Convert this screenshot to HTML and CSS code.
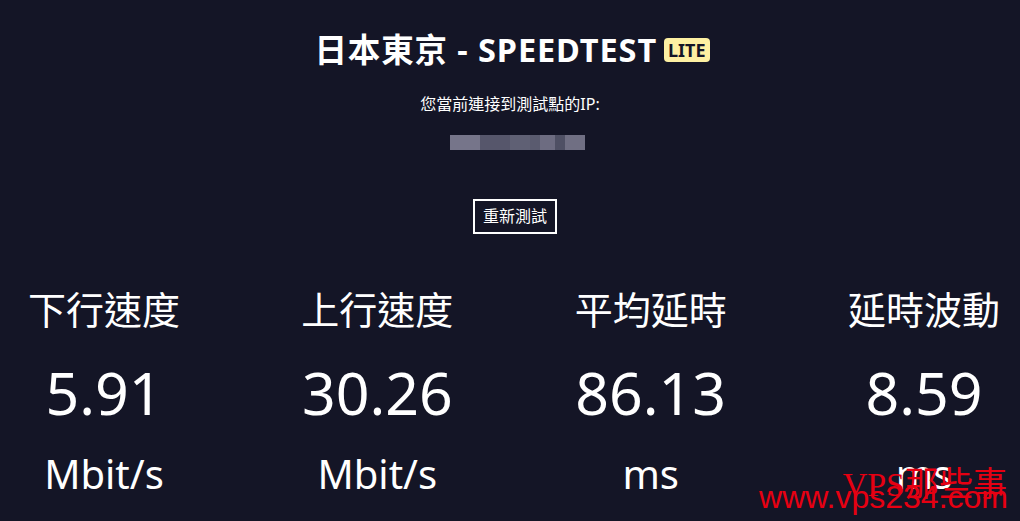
FILE: index.html
```html
<!DOCTYPE html>
<html lang="zh-Hant">

<head>
    <meta charset="UTF-8">
    <meta name="viewport" content="width=device-width, initial-scale=1.0">
    <title>日本東京 - SPEEDTEST</title>
    <link rel="stylesheet" href="styles.css">
</head>

<body>
    <div class="page">
        <h1 class="title">日本東京 - SPEEDTEST <span class="badge">LITE</span></h1>
        <p class="ip-text">您當前連接到測試點的IP:</p>
        <!-- 打了馬賽克的 IP -->
        <div class="ip-mask">
            <span style="width:30px;background:#76758a"></span>
            <span style="width:30px;background:#56566b"></span>
            <span style="width:20px;background:#5f6074"></span>
            <span style="width:10px;background:#5a5b6f"></span>
            <span style="width:15px;background:#6d6c81"></span>
            <span style="width:10px;background:#4f5064"></span>
            <span style="width:20px;background:#706f83"></span>
        </div>
        <button class="retest">重新測試</button>

        <div class="stats">
            <div class="stat">
                <div class="stat-label">下行速度</div>
                <div class="stat-value">5.91</div>
                <div class="stat-unit">Mbit/s</div>
            </div>
            <div class="stat">
                <div class="stat-label">上行速度</div>
                <div class="stat-value">30.26</div>
                <div class="stat-unit">Mbit/s</div>
            </div>
            <div class="stat">
                <div class="stat-label">平均延時</div>
                <div class="stat-value">86.13</div>
                <div class="stat-unit">ms</div>
            </div>
            <div class="stat">
                <div class="stat-label">延時波動</div>
                <div class="stat-value">8.59</div>
                <div class="stat-unit">ms</div>
            </div>
        </div>
    </div>

    <div class="watermark">
        <div class="wm-name">VPS那些事</div>
        <div class="wm-url">www.vps234.com</div>
    </div>
</body>

</html>
```

FILE: styles.css
```css
html, body {
    margin: 0;
    height: 100%;
    overflow: hidden;
}

body {
    background-color: #141526;
    color: #fff;
    font-family: "Noto Sans", "Noto Sans CJK TC", sans-serif;
}

.page {
    display: flex;
    flex-direction: column;
    align-items: center;
}

.title {
    margin: 30px 0 0 4px;
    font-size: 32.5px;
    line-height: 40px;
    font-weight: bold;
    letter-spacing: 0.9px;
    display: flex;
    align-items: center;
    gap: 7px;
}

.badge {
    background-color: #fdf0a2;
    color: #141526;
    font-size: 18px;
    line-height: 24px;
    letter-spacing: 0;
    padding: 0 4px;
    border-radius: 4px;
}

.ip-text {
    margin: 24px 0 0;
    font-size: 16px;
    line-height: 20px;
}

.ip-mask {
    display: flex;
    margin-top: 21px;
    margin-left: 14px;
    height: 15px;
}

.ip-mask span {
    display: block;
    height: 100%;
}

.retest {
    margin-top: 49px;
    margin-left: 10px;
    height: 35px;
    padding: 0 8px;
    background: transparent;
    border: 2px solid #fff;
    color: #fff;
    font-family: inherit;
    font-size: 16px;
    line-height: 31px;
}

/* 四個數據欄位 */
.stats {
    align-self: stretch;
    display: flex;
    justify-content: space-between;
    margin-top: 50px;
    padding: 0 20px 0 28px;
}

.stat {
    width: 152px;
    display: flex;
    flex-direction: column;
    align-items: center;
}

.stat-label {
    font-size: 38px;
    line-height: 50px;
    white-space: nowrap;
}

.stat-value {
    margin-top: 18px;
    font-size: 59px;
    line-height: 80px;
    white-space: nowrap;
}

.stat-unit {
    margin-top: 17px;
    font-size: 40px;
    line-height: 50px;
    white-space: nowrap;
}

/* 右下角浮水印 */
.watermark {
    position: absolute;
    right: 12px;
    bottom: 11px;
    color: #e60012;
    text-align: right;
}

.wm-name {
    font-family: "Liberation Serif", "Noto Sans CJK TC", serif;
    font-size: 34px;
    line-height: 20px;
    margin-bottom: -11px;
    padding-right: 1px;
}

.wm-url {
    font-family: "Liberation Sans", sans-serif;
    font-size: 32px;
    line-height: 26px;
}
```
